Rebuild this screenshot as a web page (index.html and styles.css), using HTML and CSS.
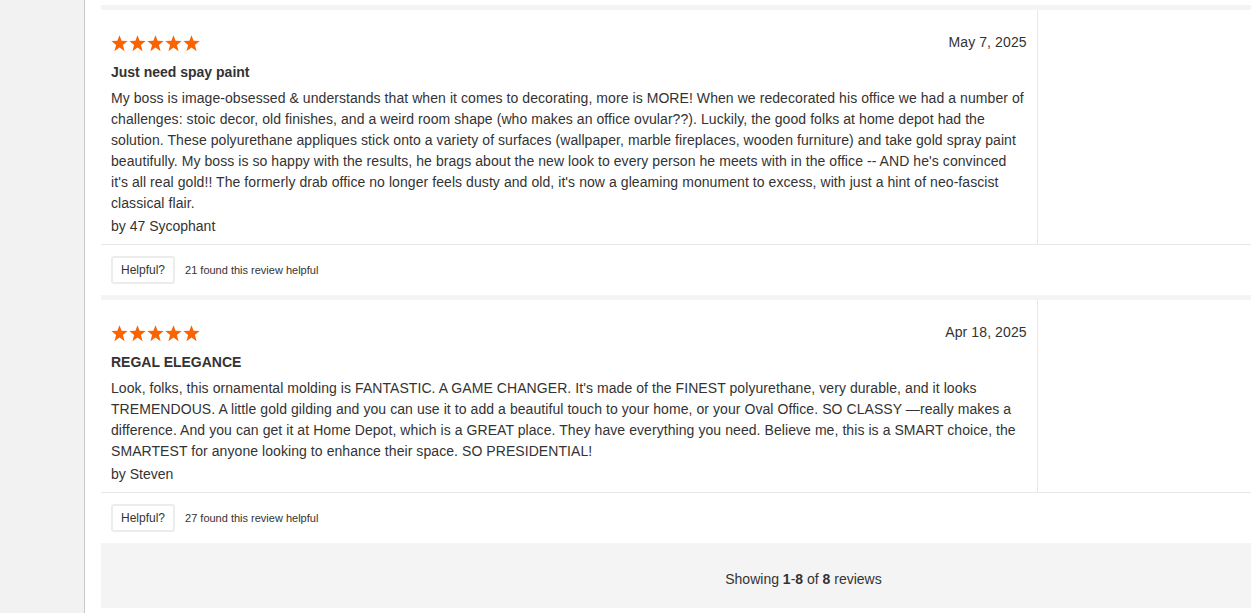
FILE: index.html
```html
<!DOCTYPE html>
<html lang="en">

<head>
    <meta charset="UTF-8">
    <meta name="viewport" content="width=device-width, initial-scale=1.0">
    <title>Customer Reviews</title>
    <link rel="stylesheet" href="styles.css">
</head>

<body>
    <div class="page">
        <div class="sidebar"></div>

        <div class="content">
            <!-- Review 1 -->
            <div class="review">
                <div class="review-top">
                    <div class="review-main">
                        <div class="review-header">
                            <svg class="stars" width="89" height="17" viewBox="0 0 89 17">
                                <defs>
                                    <polygon id="star" points="8.5,0.3 10.6,5.8 16.6,6.1 11.9,9.9 13.6,16.2 8.5,12.6 3.4,16.2 5.1,9.9 0.4,6.1 6.4,5.8" />
                                </defs>
                                <use href="#star" x="0" />
                                <use href="#star" x="18" />
                                <use href="#star" x="36" />
                                <use href="#star" x="54" />
                                <use href="#star" x="72" />
                            </svg>
                            <span class="review-date">May 7, 2025</span>
                        </div>
                        <h3 class="review-title">Just need spay paint</h3>
                        <p class="review-text">My boss is image-obsessed &amp; understands that when it comes to decorating, more is MORE! When we redecorated his office we had a number of challenges: stoic decor, old finishes, and a weird room shape (who makes an office ovular??). Luckily, the good folks at home depot had the solution. These polyurethane appliques stick onto a variety of surfaces (wallpaper, marble fireplaces, wooden furniture) and take gold spray paint beautifully. My boss is so happy with the results, he brags about the new look to every person he meets with in the office -- AND he's convinced it's all real gold!! The formerly drab office no longer feels dusty and old, it's now a gleaming monument to excess, with just a hint of neo-fascist classical flair.</p>
                        <div class="review-author">by 47 Sycophant</div>
                    </div>
                    <div class="review-side"></div>
                </div>
                <div class="review-helpful">
                    <button class="helpful-btn">Helpful?</button>
                    <span class="helpful-count">21 found this review helpful</span>
                </div>
            </div>

            <!-- Review 2 -->
            <div class="review">
                <div class="review-top">
                    <div class="review-main">
                        <div class="review-header">
                            <svg class="stars" width="89" height="17" viewBox="0 0 89 17">
                                <use href="#star" x="0" />
                                <use href="#star" x="18" />
                                <use href="#star" x="36" />
                                <use href="#star" x="54" />
                                <use href="#star" x="72" />
                            </svg>
                            <span class="review-date">Apr 18, 2025</span>
                        </div>
                        <h3 class="review-title">REGAL ELEGANCE</h3>
                        <p class="review-text">Look, folks, this ornamental molding is FANTASTIC. A GAME CHANGER. It's made of the FINEST polyurethane, very durable, and it looks TREMENDOUS. A little gold gilding and you can use it to add a beautiful touch to your home, or your Oval Office. SO CLASSY &mdash;really makes a difference. And you can get it at Home Depot, which is a GREAT place. They have everything you need. Believe me, this is a SMART choice, the SMARTEST for anyone looking to enhance their space. SO PRESIDENTIAL!</p>
                        <div class="review-author">by Steven</div>
                    </div>
                    <div class="review-side"></div>
                </div>
                <div class="review-helpful">
                    <button class="helpful-btn">Helpful?</button>
                    <span class="helpful-count">27 found this review helpful</span>
                </div>
            </div>

            <div class="review-footer">
                Showing <b>1</b>-<b>8</b> of <b>8</b> reviews
            </div>
        </div>
    </div>
</body>
</html>
```

FILE: styles.css
```css
/* Page basics */
html,
body {
margin: 0;
padding: 0;
overflow: hidden;
}

body {
font-family: "Liberation Sans", Arial, Helvetica, sans-serif;
color: #333;
background: #fff;
}

/* Sidebar on the left plus the review list */
.page {
display: flex;
min-height: 100vh;
}

.sidebar {
flex: none;
width: 84px;
background: #f2f2f2;
border-right: 1px solid #c9c9c9;
}

.content {
flex: none;
width: 1405px;
padding: 5px 0 0 16px;
}

/* One review */
.review {
border-top: 5px solid #f4f4f4;
}

.review-top {
display: flex;
border-bottom: 1px solid #e8e8e8;
}

.review-main {
width: 66.6667%;
box-sizing: border-box;
padding: 25px 10px 8px;
border-right: 1px solid #e8e8e8;
}

.review-side {
flex: 1;
}

.review-header {
display: flex;
justify-content: space-between;
align-items: flex-start;
height: 17px;
}

.stars {
display: block;
fill: #f96302;
}

.review-date {
font-size: 14px;
line-height: 14px;
letter-spacing: 0.1px;
}

.review-title {
margin: 10px 0 0;
font-size: 14px;
line-height: 20px;
font-weight: bold;
}

.review-text {
margin: 6px 0 0;
font-size: 14px;
line-height: 21px;
letter-spacing: 0.07px;
}

.review-author {
margin-top: 2px;
font-size: 14px;
line-height: 20px;
}

/* Helpful row */
.review-helpful {
display: flex;
align-items: center;
gap: 10px;
height: 50px;
padding-left: 10px;
}

.helpful-btn {
height: 28px;
padding: 0 8px;
font-family: inherit;
font-size: 12px;
color: #333;
background: #fff;
border: 2px solid #ececec;
border-radius: 3px;
}

.helpful-count {
font-size: 11px;
}

/* Bottom summary */
.review-footer {
height: 65px;
line-height: 72px;
background: #f4f4f4;
text-align: center;
font-size: 14px;
}
```
